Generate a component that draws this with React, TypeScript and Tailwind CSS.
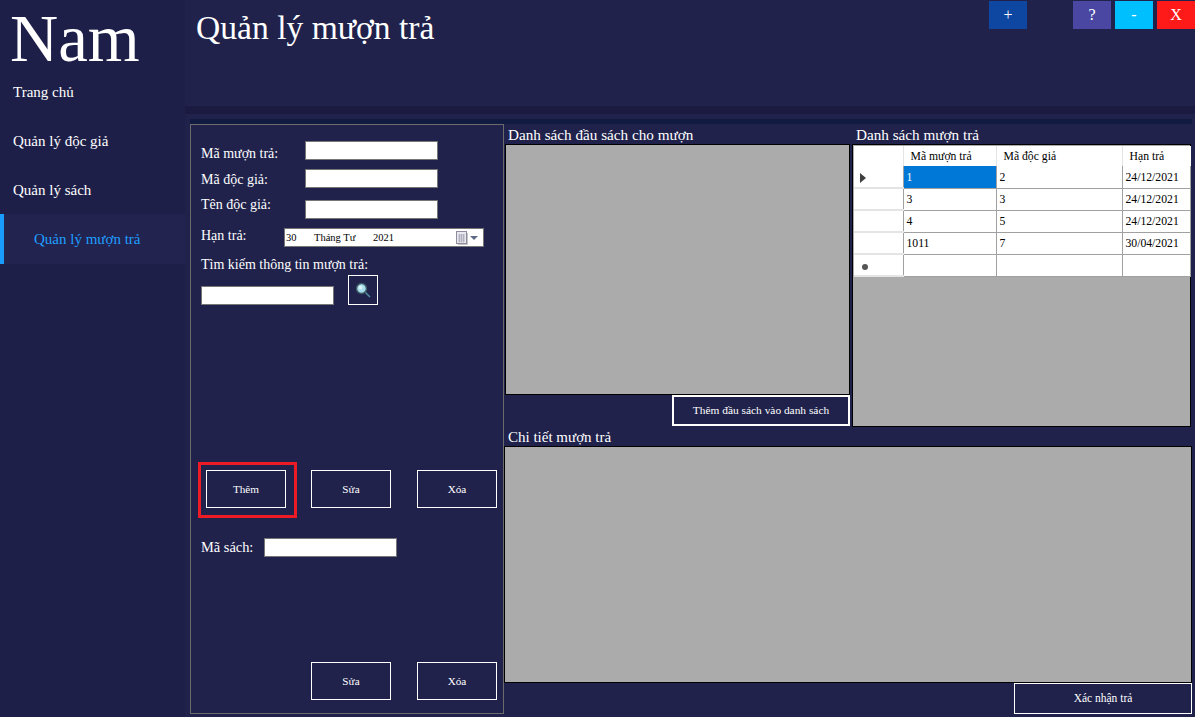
const NAV_ITEMS = ["Trang chủ", "Quản lý độc giả", "Quản lý sách"];

const ROWS = [
	["1", "2", "24/12/2021"],
	["3", "3", "24/12/2021"],
	["4", "5", "24/12/2021"],
	["1011", "7", "30/04/2021"],
	["", "", ""],
];

function TextBox({ className = "" }: { className?: string }) {
	return (
		<div
			className={`w-[133px] h-[19px] bg-white border border-[#767676] shrink-0 ${className}`}
		/>
	);
}

function ActionButton({
	label,
	className = "",
}: {
	label: string;
	className?: string;
}) {
	return (
		<button
			className={`w-[80px] h-[38px] pt-[1px] border border-white text-[11.2px] text-white shrink-0 ${className}`}
		>
			{label}
		</button>
	);
}

function CalendarIcon() {
	return (
		<svg width="12" height="14" viewBox="0 0 12 14" className="-ml-[1px]">
			<rect x="0.5" y="0.5" width="10" height="12" fill="#e8e8ee" stroke="#8c8c9c" />
			<path
				d="M2 4h7M2 6h7M2 8h7M2 10h7M3.5 3v8.500M5.500 3v8.500M7.500 3v8.500"
				stroke="#a4a4b4"
				strokeWidth="0.7"
			/>
			<path d="M11.500 2v11.500H2" stroke="#c4c4c4" fill="none" />
		</svg>
	);
}

function SearchIcon() {
	return (
		<svg width="16" height="16" viewBox="0 0 16 16">
			<path d="M10 10l5 5" stroke="#4b8f9c" strokeWidth="1.500" />
			<circle cx="6.500" cy="6.500" r="5" fill="#a9dcec" stroke="#3c5964" strokeWidth="1.500" />
			<circle cx="5.500" cy="5.500" r="2" fill="#d8f2f8" />
		</svg>
	);
}

function BorrowGrid() {
	return (
		<div className="w-[339px] h-[283px] bg-[#ababab] border border-black text-[11.7px] text-black">
			<table className="border-collapse table-fixed bg-white ml-[1px] mt-[1px] w-[336px]">
				<colgroup>
					<col className="w-[49px]" />
					<col className="w-[93px]" />
					<col className="w-[126px]" />
					<col className="w-[68px]" />
				</colgroup>
				<thead>
					<tr className="h-[20px]">
						<th className="border-r border-[#e4e4e4]" />
						<th className="border-r border-[#e4e4e4] font-normal text-left pl-[7px] pt-[1px]">
							Mã mượn trả
						</th>
						<th className="border-r border-[#e4e4e4] font-normal text-left pl-[7px] pt-[1px]">
							Mã độc giả
						</th>
						<th className="font-normal text-left pl-[7px] pt-[1px]">Hạn trả</th>
					</tr>
				</thead>
				<tbody>
					{ROWS.map((row, i) => (
						<tr key={i} className="h-[22px]">
							<td className="border-r border-[#a0a0a0] border-b-2 border-b-[#e4e4e4] pl-[6px]">
								{i === 0 && (
									<svg width="6" height="10" viewBox="0 0 6 10" className="mt-[2px]">
										<path d="M0 0l6 5-6 5z" fill="#3f3f3f" />
									</svg>
								)}
								{i === 4 && <span className="block w-[6px] h-[6px] rounded-full bg-[#555] ml-[2px] mt-[3px]" />}
							</td>
							{row.map((cell, j) => (
								<td
									key={j}
									className={`border border-[#a0a0a0] border-t-0 pl-[3px] pt-[2px] ${
										i === 0 && j === 0 ? "bg-[#0078d7] text-white" : ""
									}`}
								>
									{cell}
								</td>
							))}
						</tr>
					))}
				</tbody>
			</table>
		</div>
	);
}

export default function App() {
	return (
		<div className="flex w-[1195px] h-[717px] overflow-hidden bg-[#20224b] text-white font-['Liberation_Serif',serif]">
			<aside className="w-[185px] shrink-0 bg-[#1e1f48]">
				<div className="h-[67px] pl-[10px] pt-[1px] text-[66.7px] leading-[76px]">Nam</div>
				{NAV_ITEMS.map((item) => (
					<div key={item} className="h-[49px] flex items-center pl-[13px] pt-[2px] text-[15px]">
						{item}
					</div>
				))}
				<div className="h-[50px] flex items-center pl-[30px] text-[15px] text-[#1f9fff] bg-[#22234f] border-l-[4px] border-[#1a9cff]">
					Quản lý mượn trả
				</div>
			</aside>

			<div className="flex-1 min-w-0">
				<header className="h-[106px] flex justify-between pl-[11px]">
					<h1 className="text-[33.6px] leading-[38px] pt-[9px] font-normal">Quản lý mượn trả</h1>
					<div className="flex pt-[1px] text-[16px]">
						<button className="w-[38px] h-[28px] bg-[#0d47a1] mr-[46px]">+</button>
						<button className="w-[38px] h-[28px] bg-[#4a47a3] mr-[4px]">?</button>
						<button className="w-[38px] h-[28px] bg-[#00bfff] mr-[4px]">-</button>
						<button className="w-[38px] h-[28px] bg-[#ff1a1a]">X</button>
					</div>
				</header>
				<div className="h-[8px] bg-[#1b1b42]" />
				<div className="h-[5px] mt-[5px] ml-[5px] mr-[3px] bg-[#111a40]" />

				<div className="flex ml-[5px]">
					<section className="w-[314px] h-[590px] shrink-0 border border-[#6b6b6b] text-[14px]">
						<div className="flex pl-[10px] pt-[16px] h-[35px]">
							<span className="w-[104px] mt-[4px] leading-[18px]">Mã mượn trả:</span>
							<TextBox />
						</div>
						<div className="flex pl-[10px] mt-[9px] h-[19px]">
							<span className="w-[104px] leading-[22px]">Mã độc giả:</span>
							<TextBox />
						</div>
						<div className="flex pl-[10px] mt-[12px] h-[19px]">
							<span className="w-[104px] leading-[20px] -mt-[5px]">Tên độc giả:</span>
							<TextBox />
						</div>
						<div className="flex pl-[10px] mt-[9px] h-[19px]">
							<span className="w-[83px] leading-[18px] -mt-[1px]">Hạn trả:</span>
							<div className="w-[200px] h-[19px] bg-white border border-[#767676] flex items-center text-[10.5px] text-black pl-[1px]">
								<span className="w-[28px]">30</span>
								<span className="w-[59px]">Tháng Tư</span>
								<span className="w-[84px]">2021</span>
								<CalendarIcon />
								<svg width="8" height="4" viewBox="0 0 8 4" className="ml-[2px]">
									<path d="M0 0h8L4 4z" fill="#5d6a88" />
								</svg>
							</div>
						</div>
						<div className="pl-[10px] mt-[8px] leading-[20px]">Tìm kiếm thông tin mượn trả:</div>
						<div className="flex items-end pl-[10px]">
							<TextBox />
							<button className="w-[30px] h-[30px] ml-[14px] border border-white flex items-center justify-center">
								<SearchIcon />
							</button>
						</div>
						<div className="flex items-start ml-[7px] mt-[157px]">
							<div className="w-[99px] h-[56px] border-[3px] border-[#ed1c24] pl-[5px] pt-[5px] shrink-0">
								<ActionButton label="Thêm" />
							</div>
							<ActionButton label="Sửa" className="ml-[14px] mt-[8px]" />
							<ActionButton label="Xóa" className="ml-[26px] mt-[8px]" />
						</div>
						<div className="flex items-center pl-[10px] mt-[20px] h-[19px]">
							<span className="w-[63px] text-[14.4px]">Mã sách:</span>
							<TextBox />
						</div>
						<div className="flex ml-[120px] mt-[105px]">
							<ActionButton label="Sửa" />
							<ActionButton label="Xóa" className="ml-[26px]" />
						</div>
					</section>

					<div className="flex-1 min-w-0">
						<div className="flex h-[303px]">
							<div className="w-[348px] pl-[1px]">
								<div className="h-[20px] pl-[3px] text-[15.2px] leading-[22px]">Danh sách đầu sách cho mượn</div>
								<div className="w-[345px] h-[251px] bg-[#ababab] border border-black" />
								<div className="flex justify-end pr-[2px]">
									<button className="w-[178px] h-[31px] border-2 border-white text-[11.4px]">
										Thêm đầu sách vào danh sách
									</button>
								</div>
							</div>
							<div>
								<div className="h-[20px] pl-[4px] text-[15.2px] leading-[22px]">Danh sách mượn trả</div>
								<BorrowGrid />
							</div>
						</div>
						<div className="h-[19px] pl-[4px] text-[15px] leading-[20px]">Chi tiết mượn trả</div>
						<div className="w-[688px] h-[237px] bg-[#ababab] border border-black" />
						<div className="flex justify-end w-[688px]">
							<button className="w-[178px] h-[31px] border border-white text-[11.5px]">Xác nhận trả</button>
						</div>
					</div>
				</div>
			</div>
		</div>
	);
}
